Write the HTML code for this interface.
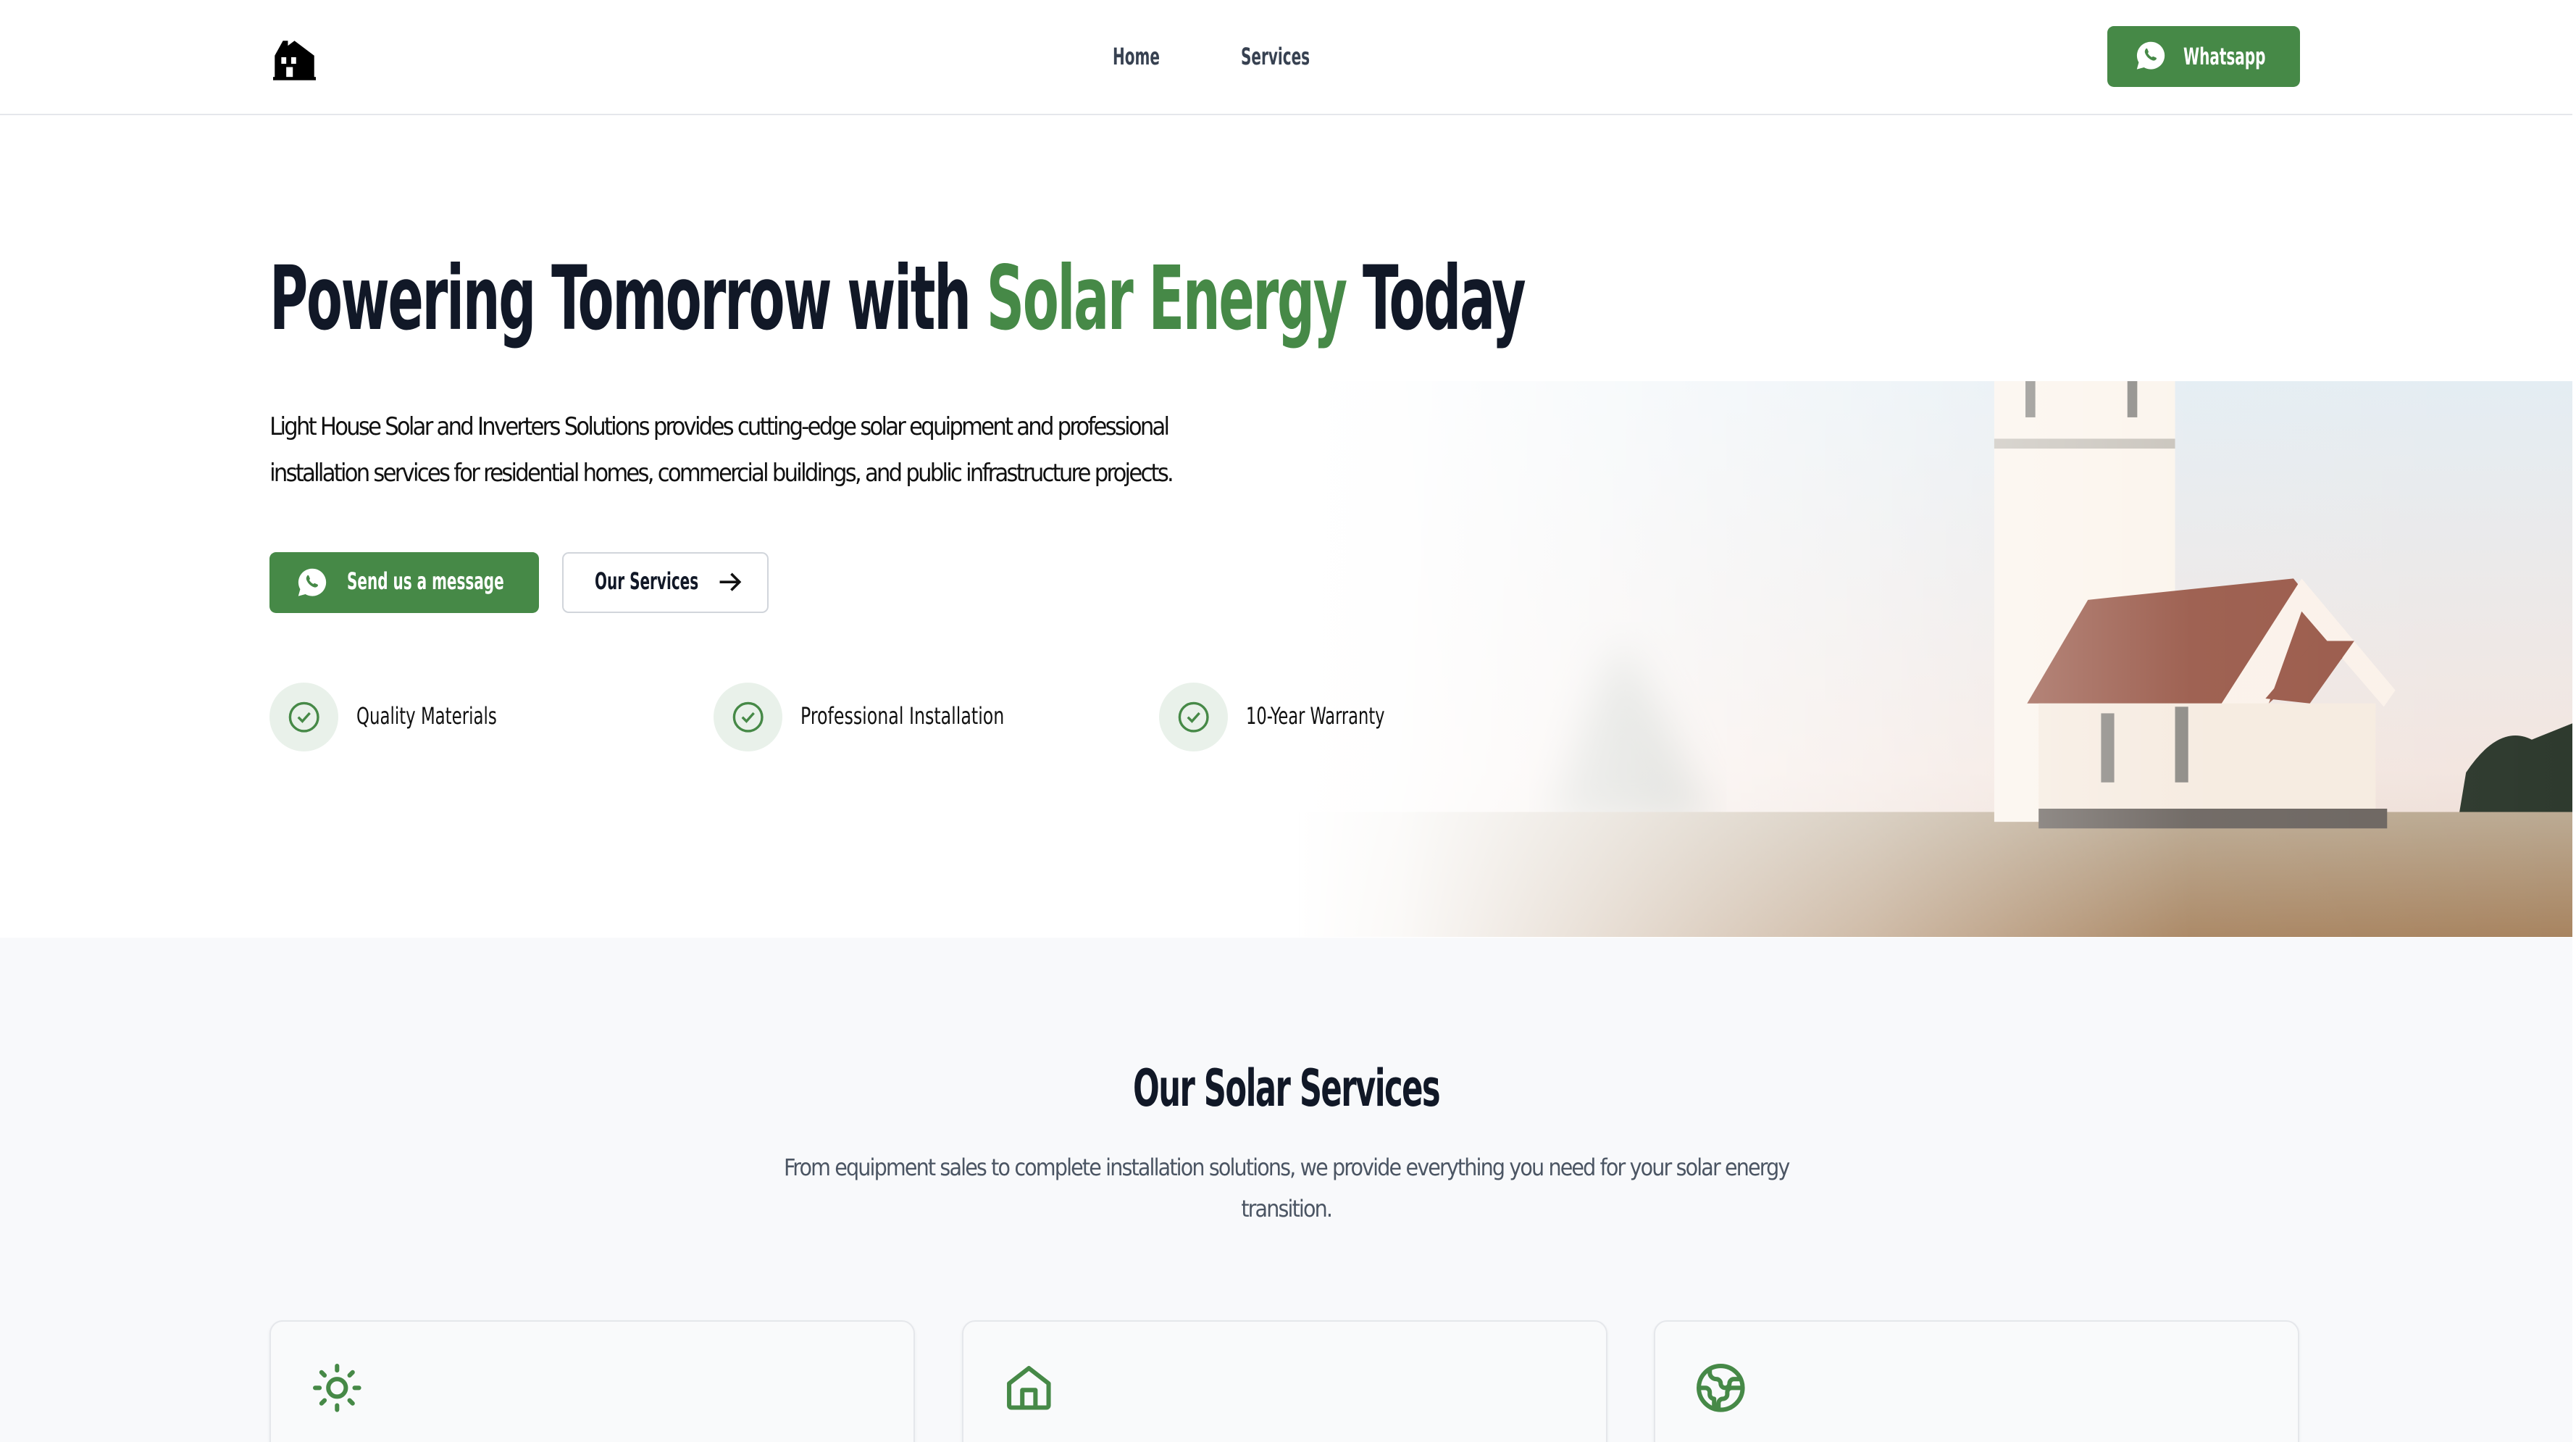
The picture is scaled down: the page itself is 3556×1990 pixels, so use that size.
<!DOCTYPE html>
<html><head><meta charset="utf-8">
<style>
html,body{margin:0;padding:0;overflow:hidden}
body{width:1567px;height:877px;zoom:2.26931;background:#fff;font-family:"DejaVu Sans Condensed","Liberation Sans",sans-serif;position:relative;color:#111827}
.abs{position:absolute}
.s{position:absolute;white-space:nowrap;transform-origin:left center}
nav{position:absolute;left:0;top:0;width:1565px;height:69px;border-bottom:1px solid #e5e7eb;background:#fff}
.navl{top:27px;font-size:14px;font-weight:700;color:#374151;transform:scaleX(.7)}
.wa{position:absolute;left:1282px;top:16px;width:117px;height:37px;background:#468947;border-radius:4px;color:#fff}
h1{position:absolute;left:164px;top:150px;margin:0;font-size:54px;font-weight:700;letter-spacing:-1.5px;color:#111827;white-space:nowrap;transform:scaleX(0.659);transform-origin:left}
.p{position:absolute;left:164px;top:246px;font-size:15px;line-height:28px;color:#111;width:600px;letter-spacing:-1.2px}
.btn1{position:absolute;left:164px;top:336px;width:164px;height:37px;background:#468947;border-radius:4px;color:#fff}
.btn2{position:absolute;left:342px;top:336px;width:124px;height:35px;border:1px solid #d1d5db;border-radius:4px;background:#fff}
.bt{top:10px;font-size:14px;font-weight:700;transform:scaleX(.7)}
.circ{position:absolute;top:415px;width:42px;height:42px;border-radius:50%;background:#e9f1ea;display:flex;align-items:center;justify-content:center}
.ft{top:428px;font-size:14px;color:#111;transform:scaleX(.8)}
.sec{position:absolute;left:0;top:570px;width:1565px;height:307px;background:#f8f9fb}
h2{position:absolute;left:689px;top:644px;margin:0;font-size:31px;font-weight:700;letter-spacing:-1px;color:#111827;white-space:nowrap;transform:scaleX(.684);transform-origin:left}
.sp{position:absolute;left:465px;width:635px;top:698px;text-align:center;font-size:14px;line-height:25px;color:#4b5563;letter-spacing:-0.82px}
.card{position:absolute;top:803px;width:391px;height:90px;border:1px solid #e5e7eb;border-radius:8px;background:#f9fafb;box-shadow:0 1px 2px rgba(0,0,0,.06)}
</style></head><body>
<nav>
<svg class="abs" style="left:166px;top:24px" width="26" height="25" viewBox="0 0 26 25"><path d="M1 24V10L6 1h3v3l4-3 12 9v14z" fill="#000"/><rect x="5" y="11" width="3" height="4" fill="#fff"/><rect x="11" y="11" width="3" height="4" fill="#fff"/><rect x="8" y="17" width="4" height="7" fill="#fff"/><rect x="0" y="23" width="26" height="2" fill="#000"/></svg>
<div class="s navl" style="left:677px">Home</div>
<div class="s navl" style="left:755px">Services</div>
<div class="wa"><svg class="abs" style="left:16px;top:8px" width="20" height="20" viewBox="0 0 24 24"><path d="M12 2a10 10 0 0 0-8.6 15L2 22l5.2-1.4A10 10 0 1 0 12 2z" fill="#fff"/><path d="M8.5 7c.4-.3 1-.3 1.2.2l.8 1.9c.1.4-.2.8-.5 1.1.6 1.3 1.7 2.4 3 3 .3-.3.7-.7 1.1-.5l1.9.8c.4.2.5.8.2 1.2-.7.9-1.8 1.2-2.9.8-2.4-.9-4.4-2.9-5.3-5.3-.4-1.1-.1-2.2.5-2.9z" fill="#468947"/></svg><div class="s bt" style="left:46px;top:11px">Whatsapp</div></div>
</nav>

<svg class="abs" style="left:790px;top:232px" width="775" height="338" viewBox="790 232 775 338">
<defs>
<linearGradient id="sky" x1="0" y1="0" x2="0" y2="1"><stop offset="0" stop-color="#e4edf3"/><stop offset=".7" stop-color="#f3e6e0"/><stop offset="1" stop-color="#e6d3c8"/></linearGradient>
<linearGradient id="grass" x1="0" y1="0" x2="0" y2="1"><stop offset="0" stop-color="#bcab94"/><stop offset="1" stop-color="#a88460"/></linearGradient>
<linearGradient id="fade" x1="0" y1="0" x2="1" y2="0"><stop offset="0" stop-color="#fff" stop-opacity="1"/><stop offset=".08" stop-color="#fff" stop-opacity=".95"/><stop offset=".45" stop-color="#fff" stop-opacity=".45"/><stop offset=".7" stop-color="#fff" stop-opacity=".05"/><stop offset="1" stop-color="#fff" stop-opacity="0"/></linearGradient>
<filter id="bl"><feGaussianBlur stdDeviation="12"/></filter>
</defs>
<rect x="790" y="232" width="775" height="338" fill="url(#sky)"/>
<path d="M1500 470 q20-30 40-20 l25-10 v60h-70z" fill="#2e3a2e"/>
<path d="M940 500 q20-60 45-110 q30 50 55 110z" fill="#8d978d" filter="url(#bl)" opacity=".6"/>
<rect x="790" y="494" width="775" height="76" fill="url(#grass)"/>
<rect x="1213" y="232" width="110" height="268" fill="#fbf4ec"/>
<rect x="1213" y="267" width="110" height="6" fill="#c8c3bb"/>
<rect x="1232" y="232" width="6" height="22" fill="#8c8a86"/><rect x="1294" y="232" width="6" height="22" fill="#8c8a86"/>
<polygon points="1233,428 1270,365 1395,352 1432,398 1400,410 1380,428" fill="#9a5a4a"/>
<polygon points="1400,352 1457,420 1450,430 1400,372 1380,428 1350,430" fill="#fbf2ea"/>
<rect x="1240" y="428" width="205" height="70" fill="#f6ebe0"/>
<polygon points="1378,425 1408,390 1432,390 1405,428" fill="#9a5a4a"/>
<rect x="1278" y="434" width="8" height="42" fill="#8d8a85"/><rect x="1323" y="430" width="8" height="46" fill="#8d8a85"/>
<rect x="1240" y="492" width="212" height="12" fill="#6c6560"/>
<rect x="790" y="232" width="775" height="338" fill="url(#fade)"/>
</svg>

<h1>Powering Tomorrow with <span style="color:#468947">Solar Energy</span> Today</h1>
<div class="p">Light House Solar and Inverters Solutions provides cutting-edge solar equipment and professional installation services for residential homes, commercial buildings, and public infrastructure projects.</div>
<div class="btn1"><svg class="abs" style="left:16px;top:8px" width="20" height="20" viewBox="0 0 24 24"><path d="M12 2a10 10 0 0 0-8.6 15L2 22l5.2-1.4A10 10 0 1 0 12 2z" fill="#fff"/><path d="M8.5 7c.4-.3 1-.3 1.2.2l.8 1.9c.1.4-.2.8-.5 1.1.6 1.3 1.7 2.4 3 3 .3-.3.7-.7 1.1-.5l1.9.8c.4.2.5.8.2 1.2-.7.9-1.8 1.2-2.9.8-2.4-.9-4.4-2.9-5.3-5.3-.4-1.1-.1-2.2.5-2.9z" fill="#468947"/></svg><div class="s bt" style="left:47px">Send us a message</div></div>
<div class="btn2"><div class="s bt" style="left:19px;top:9px">Our Services</div><svg class="abs" style="left:93px;top:9px" width="16" height="16" viewBox="0 0 16 16" fill="none" stroke="#111" stroke-width="1.6"><path d="M2 8h12M9 3l5 5-5 5"/></svg></div>

<div class="circ" style="left:164px"><svg width="20" height="20" viewBox="0 0 20 20" fill="none" stroke="#468947" stroke-width="1.5"><circle cx="10" cy="10" r="8.5"/><path d="M6.5 10l2.5 2.5 4.5-5"/></svg></div><div class="s ft" style="left:217px">Quality Materials</div>
<div class="circ" style="left:434px"><svg width="20" height="20" viewBox="0 0 20 20" fill="none" stroke="#468947" stroke-width="1.5"><circle cx="10" cy="10" r="8.5"/><path d="M6.5 10l2.5 2.5 4.5-5"/></svg></div><div class="s ft" style="left:487px;transform:scaleX(.83)">Professional Installation</div>
<div class="circ" style="left:705px"><svg width="20" height="20" viewBox="0 0 20 20" fill="none" stroke="#468947" stroke-width="1.5"><circle cx="10" cy="10" r="8.5"/><path d="M6.5 10l2.5 2.5 4.5-5"/></svg></div><div class="s ft" style="left:758px;transform:scaleX(.79)">10-Year Warranty</div>

<div class="sec"></div>
<h2>Our Solar Services</h2>
<div class="sp">From equipment sales to complete installation solutions, we provide everything you need for your solar energy transition.</div>
<div class="card" style="left:164px"><svg class="abs" style="left:24px;top:24px" width="32" height="32" viewBox="0 0 24 24" fill="none" stroke="#468947" stroke-width="2" stroke-linecap="round"><circle cx="12" cy="12" r="4"/><path d="M12 2v2M12 20v2M4.9 4.9l1.4 1.4M17.7 17.7l1.4 1.4M2 12h2M20 12h2M6.3 17.7l-1.4 1.4M19.1 4.9l-1.4 1.4"/></svg></div>
<div class="card" style="left:585px"><svg class="abs" style="left:24px;top:24px" width="32" height="32" viewBox="0 0 24 24" fill="none" stroke="#468947" stroke-width="2" stroke-linejoin="round"><path d="M3 10l9-7 9 7v10a1 1 0 0 1-1 1H4a1 1 0 0 1-1-1z"/><path d="M9 21v-8h6v8"/></svg></div>
<div class="card" style="left:1006px"><svg class="abs" style="left:24px;top:24px" width="32" height="32" viewBox="0 0 24 24" fill="none" stroke="#468947" stroke-width="2" stroke-linejoin="round"><circle cx="12" cy="12" r="10"/><path d="M21.5 12H17a2 2 0 0 0-2 2v1a2 2 0 0 1-2 2 2 2 0 0 0-2 2v2.9M7 3.3V5a3 3 0 0 0 3 3 2 2 0 0 1 2 2c0 1.1.9 2 2 2a2 2 0 0 0 2-2c0-1.1.9-2 2-2h3M2 12h3a2 2 0 0 1 2 2v1a2 2 0 0 0 2 2v4"/></svg></div>
</body></html>
